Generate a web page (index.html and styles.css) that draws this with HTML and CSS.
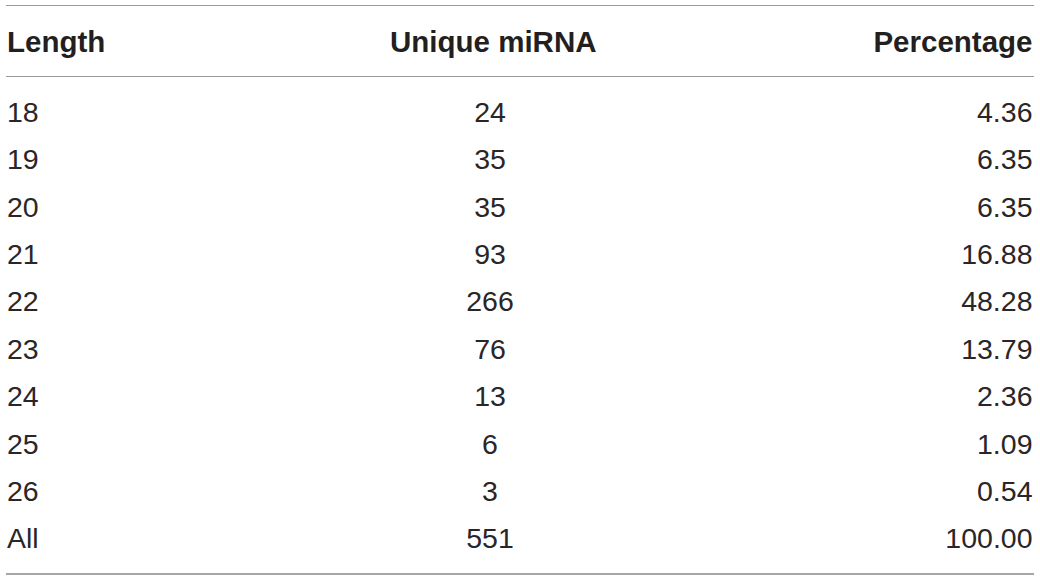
FILE: index.html
```html
<!DOCTYPE html>
<html lang="en">
<head>
<meta charset="utf-8">
<title>miRNA length distribution</title>
<link rel="stylesheet" href="styles.css">
</head>
<body>
<table class="data-table">
  <colgroup>
    <col class="col-len">
    <col class="col-uniq">
    <col class="col-pct">
  </colgroup>
  <thead>
    <tr>
      <th class="c-left">Length</th>
      <th class="c-center">Unique miRNA</th>
      <th class="c-right">Percentage</th>
    </tr>
  </thead>
  <tbody>
    <tr><td class="c-left">18</td><td class="c-center">24</td><td class="c-right">4.36</td></tr>
    <tr><td class="c-left">19</td><td class="c-center">35</td><td class="c-right">6.35</td></tr>
    <tr><td class="c-left">20</td><td class="c-center">35</td><td class="c-right">6.35</td></tr>
    <tr><td class="c-left">21</td><td class="c-center">93</td><td class="c-right">16.88</td></tr>
    <tr><td class="c-left">22</td><td class="c-center">266</td><td class="c-right">48.28</td></tr>
    <tr><td class="c-left">23</td><td class="c-center">76</td><td class="c-right">13.79</td></tr>
    <tr><td class="c-left">24</td><td class="c-center">13</td><td class="c-right">2.36</td></tr>
    <tr><td class="c-left">25</td><td class="c-center">6</td><td class="c-right">1.09</td></tr>
    <tr><td class="c-left">26</td><td class="c-center">3</td><td class="c-right">0.54</td></tr>
    <tr><td class="c-left">All</td><td class="c-center">551</td><td class="c-right">100.00</td></tr>
  </tbody>
</table>
</body>
</html>
```
FILE: styles.css
```css
html, body {
  margin: 0;
  background: #ffffff;
}

body {
  padding: 5px 6px 0 6px;
  font-family: "Liberation Sans", Arial, Helvetica, sans-serif;
  color: #231f20;
}

.data-table {
  width: 1028px;
  table-layout: fixed;
  border-collapse: separate;
  border-spacing: 0;
}

.col-len { width: 384px; }
.col-uniq { width: 200px; }
.col-pct { width: 444px; }

.data-table th {
  font-size: 29.5px;
  font-weight: 700;
  line-height: 33px;
  padding: 19px 0 18px 0;
  border-top: 1px solid #9a9a9a;
  border-bottom: 1px solid #9a9a9a;
  white-space: nowrap;
}

.data-table td {
  font-size: 28.5px;
  font-weight: 400;
  color: #2a2627;
  line-height: 47.4px;
  padding: 0;
  white-space: nowrap;
}

.data-table tbody tr:first-child td {
  padding-top: 11.8px;
}

.data-table tbody tr:last-child td {
  padding-bottom: 10.2px;
  border-bottom: 2px solid #a6a6a6;
}

.c-left {
  text-align: left;
  padding-left: 1px !important;
}

.c-center {
  text-align: center;
}

.c-right {
  text-align: right;
  padding-right: 1.5px !important;
}
```
